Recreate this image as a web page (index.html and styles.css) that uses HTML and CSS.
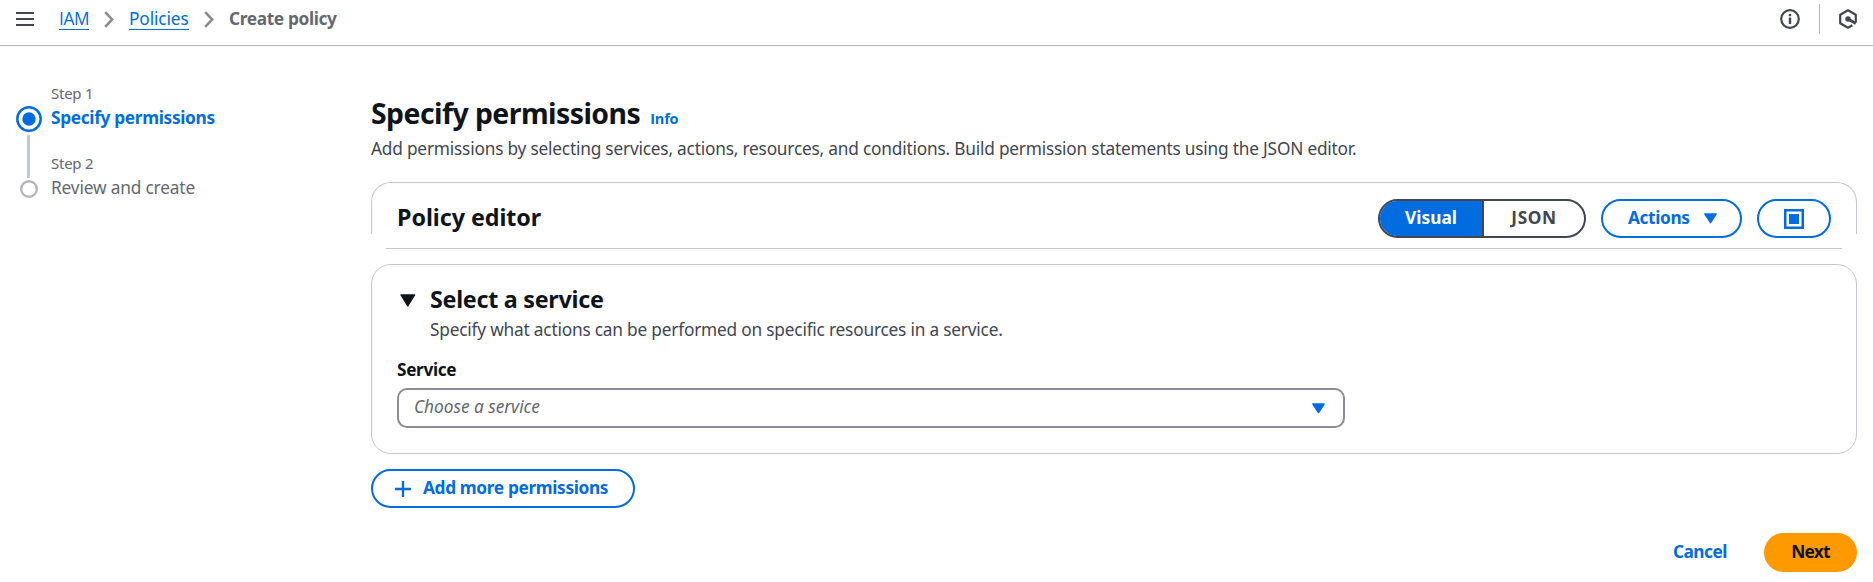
FILE: index.html
```html
<!DOCTYPE html>
<html lang="en">
<head>
<meta charset="utf-8">
<title>Create policy</title>
<link rel="stylesheet" href="styles.css">
</head>
<body>
<header class="topbar">
  <svg class="menu" width="18" height="14" viewBox="0 0 18 14"><path d="M0 1h18M0 7h18M0 13h18" stroke="#424650" stroke-width="2.2"/></svg>
  <nav class="crumbs">
    <a class="crumb crumb-iam">IAM</a>
    <svg class="chev" width="10" height="17" viewBox="0 0 10 17"><path d="M1.2 1.2 8.2 8.5 1.2 15.8" fill="none" stroke="#8c8c94" stroke-width="2.6"/></svg>
    <a class="crumb crumb-policies">Policies</a>
    <svg class="chev" width="10" height="17" viewBox="0 0 10 17"><path d="M1.2 1.2 8.2 8.5 1.2 15.8" fill="none" stroke="#8c8c94" stroke-width="2.6"/></svg>
    <span class="crumb-current">Create policy</span>
  </nav>
  <div class="tools">
    <svg width="20" height="20" viewBox="0 0 20 20"><circle cx="10" cy="10" r="8.8" fill="none" stroke="#424650" stroke-width="2.2"/><path d="M8.8 5h2.4v2.2H8.8zM8.8 8.6h2.4V15H8.8z" fill="#424650"/></svg>
    <span class="divider"></span>
    <svg width="20" height="20" viewBox="0 0 20 20"><path d="M17.8 13.4V5.8L10 1.3 2.2 5.8v8.4L10 18.7l4.4-2.5" fill="none" stroke="#424650" stroke-width="2.2" stroke-linejoin="round"/><circle cx="10" cy="10" r="2.7" fill="#424650"/><path d="m10 10 7.8 4.5" stroke="#424650" stroke-width="2.6"/></svg>
  </div>
</header>
<div class="layout">
  <ol class="steps">
    <li class="step">
      <span class="rail"><svg class="dot-active" width="26" height="26" viewBox="0 0 26 26"><circle cx="13" cy="13" r="11.7" fill="none" stroke="#006ce0" stroke-width="2.5"/><circle cx="13" cy="13" r="6.7" fill="#006ce0"/></svg><span class="line"></span></span>
      <span class="step-text"><span class="step-no">Step 1</span><b class="step-name">Specify permissions</b></span>
    </li>
    <li class="step">
      <span class="rail"><svg class="dot" width="18" height="18" viewBox="0 0 18 18"><circle cx="9" cy="9" r="7.8" fill="none" stroke="#b4b4bb" stroke-width="2.4"/></svg></span>
      <span class="step-text"><span class="step-no">Step 2</span><span class="step-name">Review and create</span></span>
    </li>
  </ol>
  <main class="main">
    <div class="title-row"><h1 class="title">Specify permissions</h1><a class="info">Info</a></div>
    <p class="desc">Add permissions by selecting services, actions, resources, and conditions. Build permission statements using the JSON editor.</p>
    <section class="editor">
      <h2 class="heading">Policy editor</h2>
      <div class="controls">
        <div class="segments"><span class="seg seg-on">Visual</span><span class="seg seg-off">JSON</span></div>
        <button class="btn btn-actions"><span class="btn-label">Actions</span><svg width="13" height="11" viewBox="0 0 13 11"><path d="M1 1h11L6.5 9.5z" fill="#006ce0" stroke="#006ce0" stroke-width="1.6" stroke-linejoin="round"/></svg></button>
        <button class="btn btn-square"><svg width="20" height="20" viewBox="0 0 20 20"><path d="M1.25 1.25h17.5v17.5H1.25z" fill="none" stroke="#006ce0" stroke-width="2.5"/><path d="M5 5h10v10H5z" fill="#006ce0"/></svg></button>
      </div>
    </section>
    <section class="card">
      <div class="expander">
        <svg class="caret" width="16" height="13" viewBox="0 0 16 13"><path d="M1 1h13.6L7.8 11.8z" fill="#0f141a" stroke="#0f141a" stroke-width="1.4" stroke-linejoin="round"/></svg>
        <div><h2 class="heading heading-service">Select a service</h2><p class="desc desc-service">Specify what actions can be performed on specific resources in a service.</p></div>
      </div>
      <div class="label">Service</div>
      <div class="select"><span class="placeholder">Choose a service</span><svg width="13" height="11" viewBox="0 0 13 11"><path d="M1 1h11L6.5 9.5z" fill="#006ce0" stroke="#006ce0" stroke-width="1.6" stroke-linejoin="round"/></svg></div>
    </section>
    <button class="btn btn-add"><svg width="16" height="16" viewBox="0 0 16 16"><path d="M8 0v16M0 8h16" stroke="#006ce0" stroke-width="2.3"/></svg><span class="btn-label">Add more permissions</span></button>
    <footer class="actions"><a class="cancel">Cancel</a><button class="next">Next</button></footer>
  </main>
</div>
</body>
</html>
```
FILE: styles.css
```css
* { box-sizing: border-box; }
body { margin: 0; background: #fff; color: #0f141a; font: 17.3px/25px "Noto Sans", sans-serif; overflow: hidden; }
h1, h2, p, ol { margin: 0; padding: 0; }
svg { display: block; flex: none; }
button { font: inherit; cursor: pointer; }

.topbar { display: flex; align-items: flex-start; height: 46px; padding-left: 16px; padding-right: 15px; border-bottom: 1px solid #b4b4bb; }
.menu { margin-top: 12px; }
.crumbs { display: flex; align-items: flex-start; padding-top: 6px; margin-left: 25px; }
.crumb { height: 24px; color: #006ce0; border-bottom: 1px solid #006ce0; }
.crumb-iam { width: 30px; font-family: "Open Sans", sans-serif; letter-spacing: -0.4px; }
.crumb-policies { width: 60px; letter-spacing: -0.12px; }
.chev { margin: 5px 15px 0 15px; }
.crumb-policies + .chev { margin-right: 15px; }
.crumb-current { font-weight: 700; color: #656871; letter-spacing: -0.36px; }
.tools { display: flex; align-items: flex-start; margin-left: auto; }
.tools svg { margin-top: 9px; }
.divider { width: 1px; height: 30px; margin: 4px 18px 0 19px; background: #b4b4bb; }

.layout { display: flex; }
.steps { width: 371px; padding: 37px 0 0 15.5px; list-style: none; }
.step { display: flex; height: 70px; gap: 9.5px; color: #656871; }
.rail { display: flex; flex-direction: column; align-items: center; width: 26px; }
.dot-active { margin-top: 23px; }
.line { width: 3px; height: 43px; margin-top: 3px; flex: none; background: #c6c6cd; }
.dot { margin-top: 27px; }
.step-text { display: flex; flex-direction: column; }
.step-no { font-size: 15px; line-height: 20px; letter-spacing: -0.25px; }
.step-name { margin-top: 2px; letter-spacing: -0.17px; }
b.step-name { color: #006ce0; letter-spacing: -0.33px; }

.main { flex: 1; padding: 49px 16px 0 0; }
.title-row { display: flex; align-items: baseline; gap: 10px; height: 41px; }
.title { font-size: 28.4px; line-height: 36px; letter-spacing: -0.54px; }
.info { font-family: "Open Sans", sans-serif; font-size: 14.5px; font-weight: 700; color: #006ce0; letter-spacing: -0.2px; }
.desc { color: #424650; letter-spacing: -0.21px; }
.desc-service { letter-spacing: -0.21px; }

.editor { position: relative; display: flex; justify-content: space-between; height: 67px; margin-top: 21px; padding: 17px 26px 0 26px; }
.editor::before { content: ""; position: absolute; inset: 0 0 15px; border: 1px solid #c6c6cd; border-bottom: 0; border-radius: 20px 20px 0 0; pointer-events: none; }
.editor::after { content: ""; position: absolute; left: 15px; right: 15px; bottom: 0; height: 1px; background: #c6c6cd; }
.heading { font-size: 23.3px; line-height: 30px; font-weight: 700; letter-spacing: -0.06px; }
.editor .heading { padding-top: 3px; }
.heading-service { letter-spacing: -0.28px; }
.controls { display: flex; gap: 15px; font-weight: 700; }
.segments { display: flex; height: 39px; width: 208px; border: 2px solid #424650; border-radius: 20px; overflow: hidden; line-height: 34px; text-align: center; }
.seg-on { width: 104px; background: #006ce0; color: #fff; border-right: 2px solid #424650; letter-spacing: 0; }
.seg-off { flex: 1; color: #424650; letter-spacing: 0.6px; }
.btn { display: flex; align-items: center; height: 39px; padding: 0; border: 2px solid #006ce0; border-radius: 20px; background: #fff; color: #006ce0; font-weight: 700; line-height: 33px; }
.btn-actions { width: 141px; padding-left: 25px; gap: 14px; letter-spacing: -0.38px; }
.btn-square { width: 74px; justify-content: center; }

.card { height: 190px; margin-top: 15px; padding: 19px 25px 0; border: 1px solid #c6c6cd; border-radius: 20px; }
.expander { display: flex; gap: 14px; }
.caret { margin: 10px 0 0 3px; }
.expander .desc { margin-top: 3px; }
.label { margin-top: 15px; font-weight: 700; letter-spacing: -0.38px; }
.select { display: flex; align-items: center; justify-content: space-between; width: 948px; height: 40px; margin-top: 6px; padding: 0 18px 0 15px; border: 2px solid #8c8c94; border-radius: 10px; }
.placeholder { padding-bottom: 4px; color: #656871; font-style: italic; letter-spacing: -0.03px; }
.btn-add { width: 264px; margin-top: 15px; padding-left: 22px; gap: 12px; letter-spacing: -0.36px; }
.btn-label { padding-bottom: 2px; }
.actions { display: flex; justify-content: flex-end; align-items: center; gap: 37px; margin-top: 25px; font-weight: 700; }
.cancel { padding-bottom: 2px; color: #006ce0; letter-spacing: -0.5px; }
.next { width: 93px; height: 39px; padding: 0 0 2px; border: 0; border-radius: 20px; background: #ff9900; color: #0f141a; font-weight: 700; letter-spacing: -0.75px; }
```
